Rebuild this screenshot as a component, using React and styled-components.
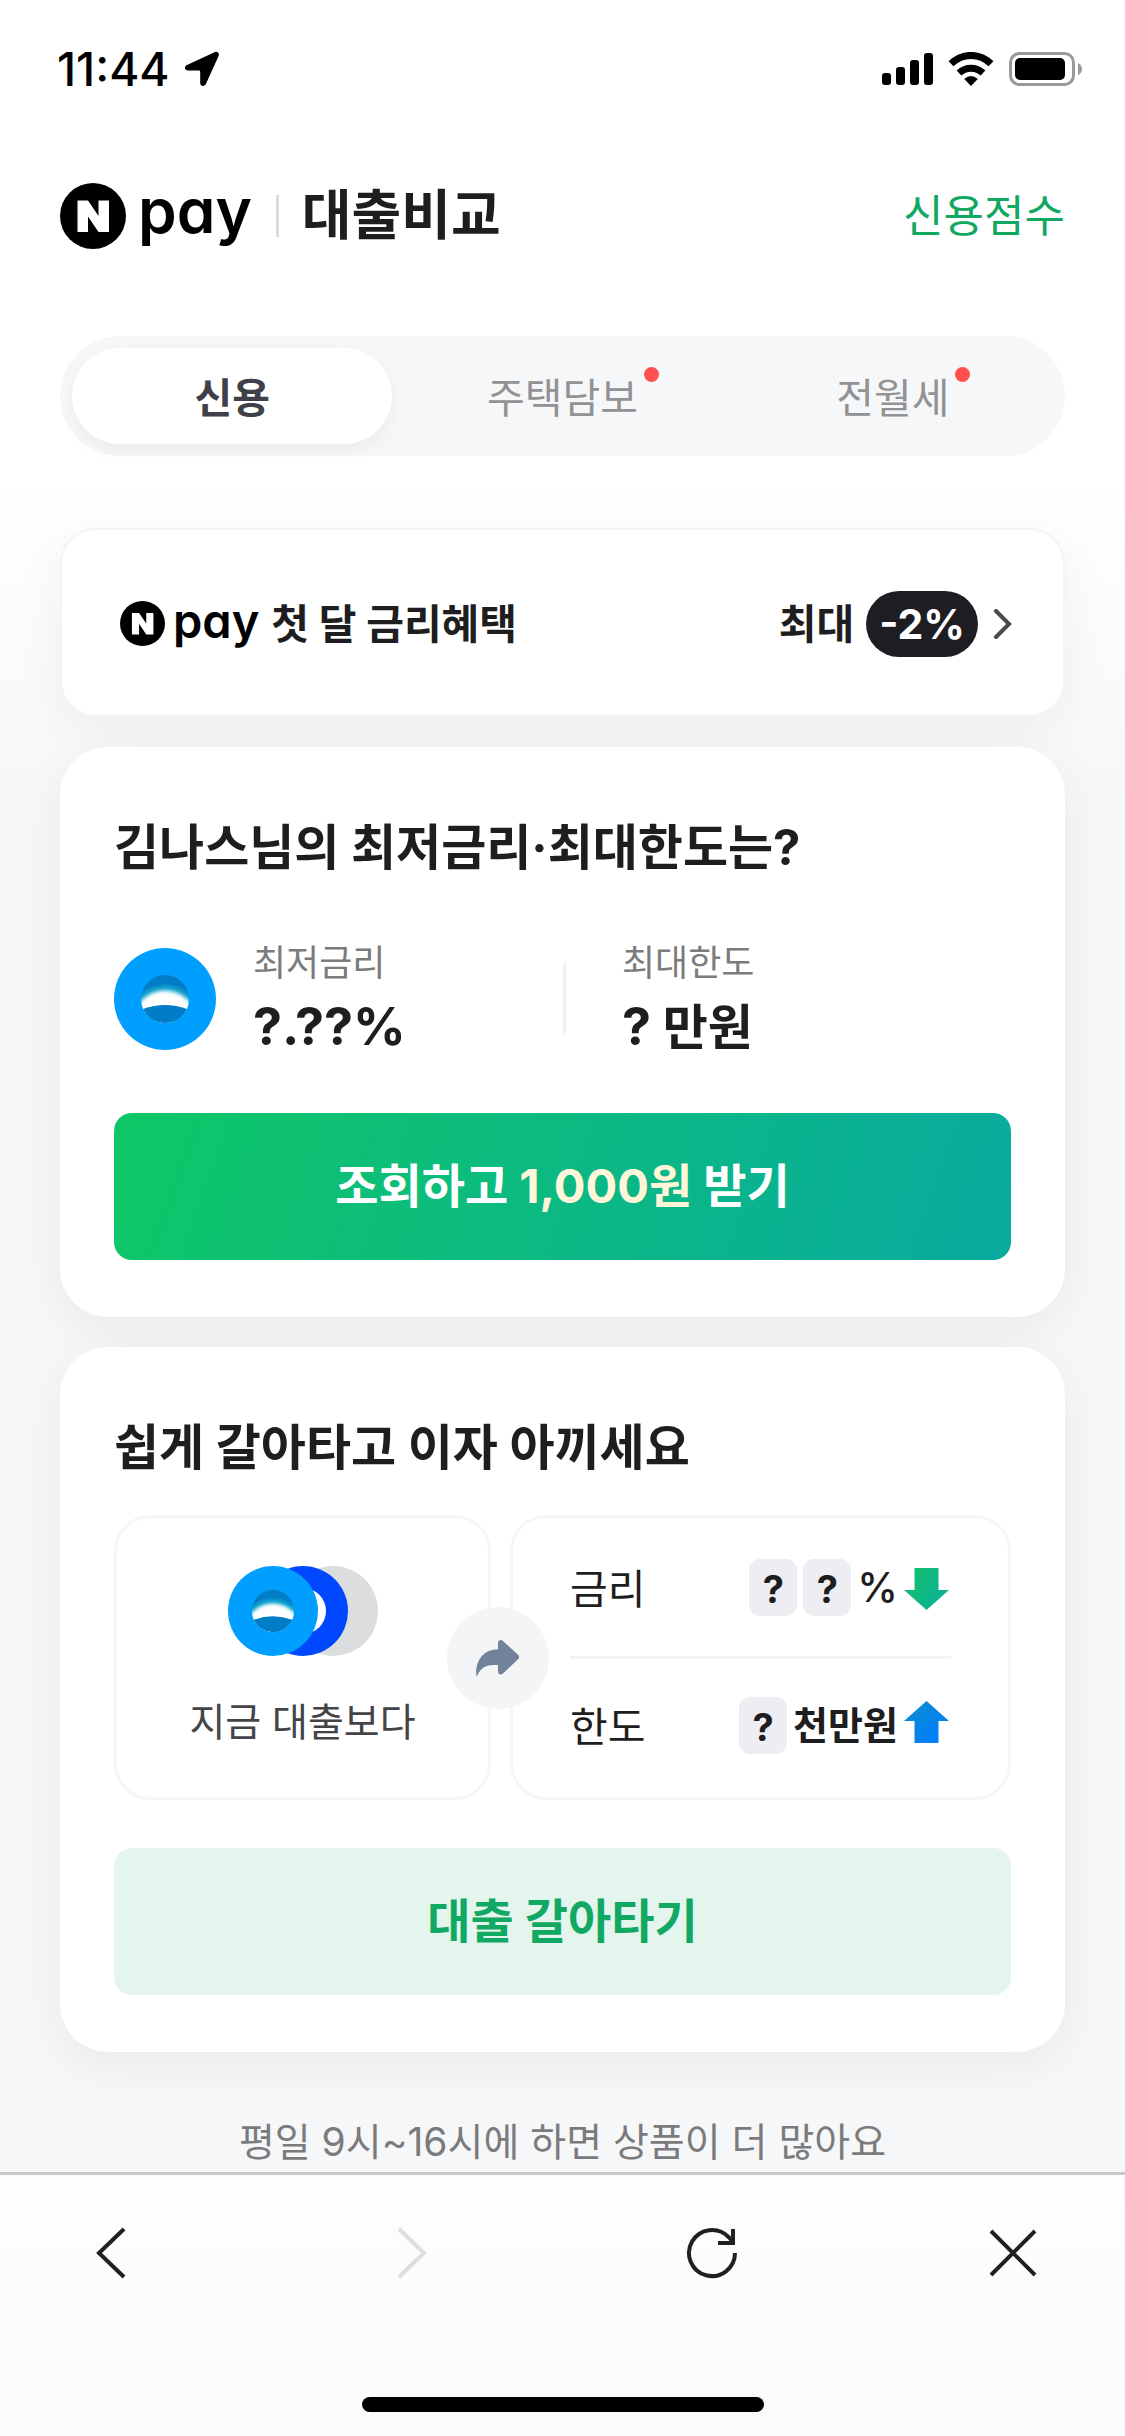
import React from 'react';
import styled, { createGlobalStyle } from 'styled-components';

const GlobalStyle = createGlobalStyle`
  * {
    box-sizing: border-box;
  }
  body {
    margin: 0;
    background: #fff;
    color: #1e1e20;
    font-family: Inter, "Noto Sans CJK KR", sans-serif;
    -webkit-font-smoothing: antialiased;
  }
  button {
    padding: 0;
    border: 0;
    background: none;
    color: inherit;
    font: inherit;
    cursor: pointer;
  }
  a {
    color: inherit;
    text-decoration: none;
  }
  h1, h2, p, dl, dt, dd {
    margin: 0;
    font: inherit;
  }
  svg {
    display: block;
    flex: none;
  }
`;

const Page = styled.div`
  display: flex;
  flex-direction: column;
  min-height: 100vh;
  background: linear-gradient(#fff 480px, #f6f7f9 800px);
`;
const StatusBar = styled.div`
  display: flex;
  align-items: center;
  justify-content: space-between;
  height: 138px;
  padding: 0 42px 0 57px;
  color: #000;
`;
const Clock = styled.div`
  display: flex;
  align-items: center;
  gap: 14px;
  font-size: 46px;
  font-weight: 500;
  line-height: 54px;
`;
const StatusIcons = styled.div`
  display: flex;
  align-items: center;
  gap: 15px;
`;

const Header = styled.header`
  display: flex;
  align-items: center;
  justify-content: space-between;
  height: 156px;
  padding: 0 60px;
`;
const Brand = styled.div`
  display: flex;
  align-items: center;
`;
const LogoRow = styled.span`
  display: flex;
  align-items: center;
  gap: ${({ $small }) => ($small ? 8 : 12)}px;
  color: #000;
`;
const LogoText = styled.span`
  font-size: ${({ $small }) => ($small ? 47 : 62)}px;
  font-weight: 600;
  font-feature-settings: "cv11";
  line-height: 66px;
  padding-bottom: ${({ $small }) => ($small ? 6 : 10)}px;
`;
const BrandDivider = styled.span`
  width: 3px;
  height: 42px;
  margin: 0 23px 0 24px;
  background: #dcdcde;
`;
const Title = styled.h1`
  font-size: 54px;
  font-weight: 700;
  line-height: 66px;
`;
const ScoreLink = styled.a`
  color: #11a863;
  font-size: 44px;
  font-weight: 400;
  line-height: 60px;
`;

const Tabs = styled.nav`
  display: grid;
  grid-template-columns: repeat(3, 1fr);
  gap: 10px;
  margin: 42px 60px 0;
  padding: 12px;
  border-radius: 60px;
  background: #f5f7f9;
`;
const Tab = styled.button`
  height: 96px;
  padding-top: 3px;
  border-radius: 48px;
  background: ${({ $active }) => ($active ? '#fff' : 'none')};
  box-shadow: ${({ $active }) => ($active ? '0 6px 18px rgba(0, 0, 0, 0.05)' : 'none')};
  color: ${({ $active }) => ($active ? '#404048' : '#929294')};
  font-size: 41px;
  font-weight: ${({ $active }) => ($active ? 700 : 400)};
  line-height: 60px;
`;
const TabLabel = styled.span`
  position: relative;
`;
const NewDot = styled.span`
  position: absolute;
  top: -6px;
  right: -21px;
  width: 15px;
  height: 15px;
  border-radius: 50%;
  background: #ff504f;
`;

const Cards = styled.main`
  display: flex;
  flex-direction: column;
  gap: 30px;
  padding: 72px 60px 0;
`;
const Banner = styled.a`
  display: flex;
  align-items: center;
  justify-content: space-between;
  height: 189px;
  padding: 2px 50px 0 58px;
  border: 2px solid #f3f4f5;
  border-radius: 36px;
  background: #fff;
  box-shadow: 0 12px 48px rgba(0, 0, 0, 0.05);
  font-size: 41px;
  font-weight: 700;
  line-height: 60px;
`;
const BannerSide = styled.span`
  display: flex;
  align-items: center;
  gap: 12px;
`;
const RateBadge = styled.span`
  height: 66px;
  padding: 0 13px;
  margin-right: 3px;
  border-radius: 33px;
  background: #1e1e22;
  color: #fff;
  line-height: 66px;
`;

const Card = styled.section`
  padding: 66px 54px 57px;
  border-radius: 48px;
  background: #fff;
  box-shadow: 0 12px 48px rgba(0, 0, 0, 0.06);
`;
const CardTitle = styled.h2`
  font-size: 49px;
  font-weight: 700;
  line-height: 70px;
`;
const Offer = styled.div`
  display: flex;
  align-items: center;
  height: 120px;
  margin: 56px 0 54px;
`;
const OfferStats = styled.dl`
  display: grid;
  flex: 1;
  grid-template-columns: 310px 1fr;
  margin-left: 37px;
`;
const Stat = styled.div`
  position: relative;
  padding-left: ${({ $divided }) => ($divided ? 59 : 0)}px;

  &:before {
    content: "";
    display: ${({ $divided }) => ($divided ? 'block' : 'none')};
    position: absolute;
    top: 28px;
    left: 0;
    width: 3px;
    height: 72px;
    background: #f0f1f2;
  }
`;
const StatLabel = styled.dt`
  color: #7b7b7d;
  font-size: 36px;
  line-height: 56px;
`;
const StatValue = styled.dd`
  font-size: 52px;
  font-weight: 700;
  line-height: 72px;
`;
const StatUnit = styled.span`
  font-size: 49px;
`;
const ActionButton = styled.button`
  display: block;
  width: 100%;
  height: 147px;
  padding-bottom: 8px;
  border-radius: 18px;
  background: ${({ $soft }) =>
    $soft ? '#e3f5ec' : 'linear-gradient(110deg, #0fc766, #08ab9f)'};
  color: ${({ $soft }) => ($soft ? '#11a863' : '#fff')};
  font-size: 47px;
  font-weight: 700;
`;
const Reward = styled.span`
  color: #fff5d8;
`;

const Compare = styled.div`
  display: grid;
  grid-template-columns: 377fr 501fr;
  gap: 19px;
  position: relative;
  margin: 32px 0 48px;
`;
const Panel = styled.div`
  height: 285px;
  border: 3px solid #f4f6f7;
  border-radius: 36px;
`;
const CurrentLoan = styled(Panel)`
  display: flex;
  flex-direction: column;
  align-items: center;
  padding-top: 48px;
  color: #444448;
  font-size: 39px;
  line-height: 60px;
`;
const BankStack = styled.div`
  display: flex;
  margin-bottom: 36px;
`;
const BankSlot = styled.span`
  z-index: ${({ $level }) => $level};

  & + & {
    margin-left: -60px;
  }
`;
const SwapMark = styled.div`
  display: flex;
  position: absolute;
  top: 92px;
  left: calc(43% - 53px);
  align-items: center;
  justify-content: center;
  width: 102px;
  height: 102px;
  border-radius: 50%;
  background: #f3f5f7;
`;
const NewLoan = styled(Panel)`
  padding: 0 57px;
`;
const Term = styled.div`
  display: flex;
  align-items: center;
  justify-content: space-between;
  height: 138px;
  padding-right: 2px;
  font-size: 41px;
  line-height: 60px;

  & + & {
    padding-bottom: 3px;
    border-top: 3px solid #f2f4f5;
  }
`;
const TermName = styled.dt`
  padding-top: 3px;
`;
const TermValue = styled.dd`
  display: flex;
  align-items: center;
  gap: 6px;
  font-size: 38px;
  font-weight: 700;
`;
const Percent = styled.span`
  font-size: 41px;
  font-weight: 500;
`;
const Unknown = styled.span`
  width: 48px;
  height: 57px;
  border-radius: 11px;
  background: #edeef2;
  line-height: 60px;
  text-align: center;
`;

const Notice = styled.p`
  padding: 60px 0 0;
  color: #7b7b7d;
  font-size: 39px;
  line-height: 60px;
  text-align: center;
`;
const BrowserBar = styled.footer`
  margin-top: auto;
  border-top: 3px solid #c8c9cb;
  background: linear-gradient(#fdfdfd, #fafbfd);
`;
const BrowserButtons = styled.div`
  display: flex;
  align-items: center;
  justify-content: space-between;
  height: 156px;
  padding: 0 76px 0 75px;
`;
const BarButton = styled.button`
  display: flex;
  align-items: center;
  justify-content: center;
  width: 72px;
  height: 72px;
  color: #202022;

  &:disabled {
    color: #dedede;
  }
`;
const HomeIndicator = styled.div`
  width: 402px;
  height: 15px;
  margin: 66px auto 24px;
  border-radius: 8px;
  background: #000;
`;

const LocationIcon = () => (
  <svg width="36" height="36" viewBox="0 0 36 36" fill="currentColor">
    <path d="M30.500 1.200C33.300-.1 35.800 2.300 34.600 5L22 32.800C20.600 36 16.200 35.400 16.200 32V20.800Q16.200 19.500 15 19.500H4C.5 19.500-.2 15.400 3 14Z" />
  </svg>
);

const SignalIcon = () => (
  <svg width="51" height="32" viewBox="0 0 51 32" fill="currentColor">
    <rect y="20" width="9" height="12" rx="3" />
    <rect x="14" y="14" width="9" height="18" rx="3" />
    <rect x="28" y="7" width="9" height="25" rx="3" />
    <rect x="42" width="9" height="32" rx="3" />
  </svg>
);

const WifiIcon = () => (
  <svg width="46" height="34" viewBox="0 0 46 34" fill="none" stroke="currentColor" strokeWidth="7">
    <path d="M3 11.800C14.500.6 31.500.6 43 11.800" />
    <path d="M11 21C17.800 14.600 28.200 14.600 35 21" />
    <path d="M16.200 27Q23 21 29.800 27L23 34Z" fill="currentColor" stroke="none" />
  </svg>
);

const BatteryIcon = () => (
  <svg width="74" height="34" viewBox="0 0 74 34">
    <rect x="1.500" y="1.500" width="63" height="31" rx="9" fill="none" stroke="#9a9a9a" strokeWidth="3" />
    <rect x="6" y="6" width="50" height="22" rx="5" />
    <path d="M69 11Q73 13 73 17T69 23Z" fill="#9a9a9a" />
  </svg>
);

const NMark = ({ size }) => (
  <svg width={size} height={size} viewBox="0 0 66 66">
    <circle cx="33" cy="33" r="33" />
    <path d="M17.500 17.500H28L38.500 33V17.500H49V49H38.500L28 33.500V49H17.500Z" fill="#fff" />
  </svg>
);

const PayLogo = ({ small }) => (
  <LogoRow $small={small}>
    <NMark size={small ? 45 : 66} />
    <LogoText $small={small}>pay</LogoText>
  </LogoRow>
);

const BankIcon = ({ size, id }) => (
  <svg width={size} height={size} viewBox="0 0 102 102">
    <defs>
      <radialGradient id={id} gradientUnits="userSpaceOnUse" cx="51" cy="75" r="41">
        <stop offset="0.680" stopColor="#fff" />
        <stop offset="0.740" stopColor="#dff5f9" />
        <stop offset="0.850" stopColor="#18a5cf" />
        <stop offset="0.970" stopColor="#007dc6" />
      </radialGradient>
    </defs>
    <circle cx="51" cy="51" r="51" fill="#009fff" />
    <circle cx="51" cy="51" r="24" fill={`url(#${id})`} />
    <path d="M29 61Q51 53 73 61Q66 75 51 75T29 61Z" fill="#007dc6" />
  </svg>
);

const SecondBankIcon = () => (
  <svg width="90" height="90" viewBox="0 0 90 90">
    <circle cx="45" cy="45" r="45" fill="#0048ff" />
    <circle cx="45" cy="45" r="23" fill="#fff" />
  </svg>
);

const EmptyBankIcon = () => (
  <svg width="90" height="90" viewBox="0 0 90 90">
    <circle cx="45" cy="45" r="45" fill="#dcdddf" />
  </svg>
);

const SwapIcon = () => (
  <svg width="43" height="36" viewBox="0 0 43 36" fill="#71829a">
    <path d="M.3 35.500C-.8 20 8 9.500 22 9.300V3.200C22 .4 25 -.9 27 1L42 14.800Q44.200 17 42 19.200L27 33.500C25 35.500 22 34.300 22 31.500V25.200C11.500 24.200 5.500 26.500 1.500 35Q.8 36.300.3 35.500Z" />
  </svg>
);

const TrendArrow = ({ up }) => (
  <svg width="45" height="48" viewBox="0 0 45 48">
    <defs>
      <linearGradient id={up ? 'up' : 'down'} x1="0" y1="0" x2="1" y2={up ? 1 : 0.5}>
        <stop offset="0.200" stopColor={up ? '#0a8ad6' : '#13bf70'} />
        <stop offset="0.900" stopColor={up ? '#007dff' : '#0bb491'} />
      </linearGradient>
    </defs>
    {up ? (
      <path d="M22.500 0L45 20H34.500V42H10.500V20H0Z" fill="url(#up)" />
    ) : (
      <path d="M22.500 47L45 27H34.500V5H10.500V27H0Z" fill="url(#down)" />
    )}
  </svg>
);

const MoreIcon = () => (
  <svg width="20" height="30" viewBox="0 0 20 30" fill="none" stroke="#4a4a4e" strokeWidth="4" strokeLinecap="round">
    <path d="M3 2L16 15L3 28" />
  </svg>
);

const BarIcon = ({ d, children }) => (
  <svg width="54" height="54" viewBox="0 0 54 54" fill="none" stroke="currentColor" strokeWidth="4">
    <path d={d} />
    {children}
  </svg>
);

const tabs = [
  { name: '신용', active: true },
  { name: '주택담보', isNew: true },
  { name: '전월세', isNew: true },
];

const App = () => {
  return (
    <Page>
      <GlobalStyle />
      <StatusBar>
        <Clock>
          11:44
          <LocationIcon />
        </Clock>
        <StatusIcons>
          <SignalIcon />
          <WifiIcon />
          <BatteryIcon />
        </StatusIcons>
      </StatusBar>

      <Header>
        <Brand>
          <PayLogo />
          <BrandDivider />
          <Title>대출비교</Title>
        </Brand>
        <ScoreLink href="#score">신용점수</ScoreLink>
      </Header>

      <Tabs>
        {tabs.map(({ name, active, isNew }) => (
          <Tab key={name} type="button" $active={active}>
            <TabLabel>
              {name}
              {isNew && <NewDot />}
            </TabLabel>
          </Tab>
        ))}
      </Tabs>

      <Cards>
        <Banner href="#benefit">
          <BannerSide>
            <PayLogo small />
            첫 달 금리혜택
          </BannerSide>
          <BannerSide>
            최대
            <RateBadge>-2%</RateBadge>
            <MoreIcon />
          </BannerSide>
        </Banner>

        <Card>
          <CardTitle>김나스님의 최저금리·최대한도는?</CardTitle>
          <Offer>
            <BankIcon size={102} id="bank-large" />
            <OfferStats>
              <Stat>
                <StatLabel>최저금리</StatLabel>
                <StatValue>?.??%</StatValue>
              </Stat>
              <Stat $divided>
                <StatLabel>최대한도</StatLabel>
                <StatValue>
                  ?<StatUnit> 만원</StatUnit>
                </StatValue>
              </Stat>
            </OfferStats>
          </Offer>
          <ActionButton type="button">
            조회하고 <Reward>1,000원</Reward> 받기
          </ActionButton>
        </Card>

        <Card>
          <CardTitle>쉽게 갈아타고 이자 아끼세요</CardTitle>
          <Compare>
            <CurrentLoan>
              <BankStack>
                <BankSlot $level={3}>
                  <BankIcon size={90} id="bank-small" />
                </BankSlot>
                <BankSlot $level={2}>
                  <SecondBankIcon />
                </BankSlot>
                <BankSlot $level={1}>
                  <EmptyBankIcon />
                </BankSlot>
              </BankStack>
              지금 대출보다
            </CurrentLoan>
            <NewLoan as="dl">
              <Term>
                <TermName>금리</TermName>
                <TermValue>
                  <Unknown>?</Unknown>
                  <Unknown>?</Unknown>
                  <Percent>%</Percent>
                  <TrendArrow />
                </TermValue>
              </Term>
              <Term>
                <TermName>한도</TermName>
                <TermValue>
                  <Unknown>?</Unknown>
                  <span>천만원</span>
                  <TrendArrow up />
                </TermValue>
              </Term>
            </NewLoan>
            <SwapMark>
              <SwapIcon />
            </SwapMark>
          </Compare>
          <ActionButton type="button" $soft>
            대출 갈아타기
          </ActionButton>
        </Card>
      </Cards>

      <Notice>평일 9시~16시에 하면 상품이 더 많아요</Notice>

      <BrowserBar>
        <BrowserButtons>
          <BarButton type="button" aria-label="뒤로">
            <BarIcon d="M40 3L15 27L40 51" />
          </BarButton>
          <BarButton type="button" aria-label="앞으로" disabled>
            <BarIcon d="M14 3L39 27L14 51" />
          </BarButton>
          <BarButton type="button" aria-label="새로고침">
            <BarIcon d="M50 27A23 23 0 1 1 43.500 11Q47 14 48 17">
              <path d="M48 3V17H33" />
            </BarIcon>
          </BarButton>
          <BarButton type="button" aria-label="닫기">
            <BarIcon d="M5 5L49 49M49 5L5 49" />
          </BarButton>
        </BrowserButtons>
        <HomeIndicator />
      </BrowserBar>
    </Page>
  );
};

export default App;
